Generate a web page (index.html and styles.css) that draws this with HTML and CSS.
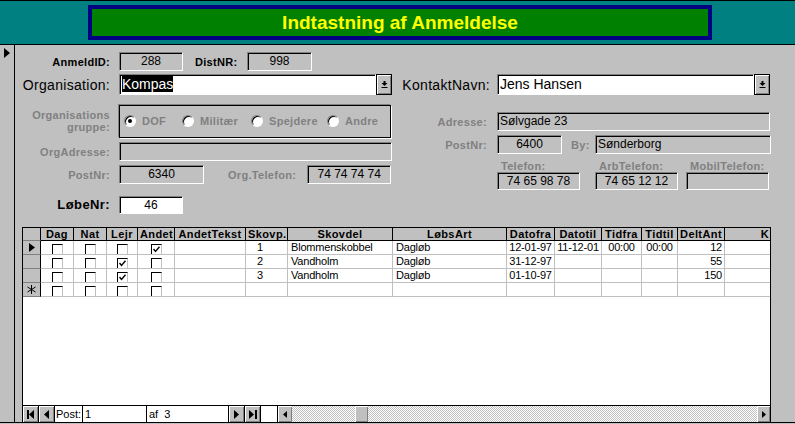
FILE: index.html
```html
<!DOCTYPE html>
<html lang="da">
<head>
<meta charset="utf-8">
<title>Indtastning af Anmeldelse</title>
<link rel="stylesheet" href="styles.css">
</head>
<body>
<div class="app">
  <header class="titlebar">
    <div class="title">Indtastning af Anmeldelse</div>
  </header>
  <div class="body">
    <div class="recsel">
      <svg class="tri" width="6" height="10" viewBox="0 0 6 10"><polygon points="0,0 6,5 0,10" fill="#000"/></svg>
    </div>
    <div class="form">
      <div class="top">
        <div class="left">
          <div class="row r1">
            <span class="lbl lw">AnmeldID:</span>
            <div class="box c f1">288</div>
            <span class="lbl distlbl">DistNR:</span>
            <div class="box c distbox">998</div>
          </div>
          <div class="row r2">
            <span class="biglbl lw">Organisation:</span>
            <div class="input f1 orginput"><span class="sel">Kompas</span></div>
            <div class="drop"><svg width="7" height="8" viewBox="0 0 7 8"><rect x="2.5" y="0" width="2" height="2" fill="#000"/><polygon points="0.5,2 6.5,2 3.5,5" fill="#000"/><rect x="0.5" y="6" width="6" height="1" fill="#000"/></svg></div>
          </div>
          <div class="row r3">
            <span class="lbl lw dim two">Organisations<br>gruppe:</span>
            <div class="frame f1">
              <div class="opt"><span class="radio on"></span><span class="lbl dim">DOF</span></div>
              <div class="opt"><span class="radio"></span><span class="lbl dim">Militær</span></div>
              <div class="opt"><span class="radio"></span><span class="lbl dim">Spejdere</span></div>
              <div class="opt"><span class="radio"></span><span class="lbl dim">Andre</span></div>
            </div>
          </div>
          <div class="row r4">
            <span class="lbl lw dim">OrgAdresse:</span>
            <div class="box f1 orgadr"></div>
          </div>
          <div class="row r5">
            <span class="lbl lw dim">PostNr:</span>
            <div class="box c f1 postbox">6340</div>
            <span class="lbl dim orgtellbl">Org.Telefon:</span>
            <div class="box c orgtel">74 74 74 74</div>
          </div>
          <div class="row r6">
            <span class="lbl lw lobelbl">LøbeNr:</span>
            <div class="box white c f1 lobebox">46</div>
          </div>
        </div>
        <div class="right">
          <div class="row rr1">
            <span class="biglbl kontaktlbl">KontaktNavn:</span>
            <div class="input kontaktinput">Jens Hansen</div>
            <div class="drop"><svg width="7" height="8" viewBox="0 0 7 8"><rect x="2.5" y="0" width="2" height="2" fill="#000"/><polygon points="0.5,2 6.5,2 3.5,5" fill="#000"/><rect x="0.5" y="6" width="6" height="1" fill="#000"/></svg></div>
          </div>
          <div class="row rr2">
            <span class="lbl rlw dim">Adresse:</span>
            <div class="box rf adr">Sølvgade 23</div>
          </div>
          <div class="row rr3">
            <span class="lbl rlw dim">PostNr:</span>
            <div class="box c rf rpost">6400</div>
            <span class="lbl dim bylbl">By:</span>
            <div class="box bybox">Sønderborg</div>
          </div>
          <div class="tels">
            <div class="tel"><span class="lbl dim tl">Telefon:</span><div class="box c telbox">74 65 98 78</div></div>
            <div class="tel t2"><span class="lbl dim tl">ArbTelefon:</span><div class="box c telbox">74 65 12 12</div></div>
            <div class="tel t3"><span class="lbl dim tl">MobilTelefon:</span><div class="box c telbox"></div></div>
          </div>
        </div>
      </div>

      <div class="sheet">
        <div class="gridwrap">
          <div class="grow head">
            <div class="cell rs"></div>
            <div class="cell">Dag</div>
            <div class="cell">Nat</div>
            <div class="cell">Lejr</div>
            <div class="cell">Andet</div>
            <div class="cell">AndetTekst</div>
            <div class="cell">Skovp.</div>
            <div class="cell">Skovdel</div>
            <div class="cell">LøbsArt</div>
            <div class="cell">Datofra</div>
            <div class="cell">Datotil</div>
            <div class="cell">Tidfra</div>
            <div class="cell">Tidtil</div>
            <div class="cell">DeltAnt</div>
            <div class="cell lastcol">K</div>
          </div>
          <div class="grow">
            <div class="cell rs"><svg width="6" height="9" viewBox="0 0 6 9"><polygon points="0,0 6,4.5 0,9" fill="#000"/></svg></div>
            <div class="cell cc"><span class="chk"></span></div>
            <div class="cell cc"><span class="chk"></span></div>
            <div class="cell cc"><span class="chk"></span></div>
            <div class="cell cc"><span class="chk on"><svg width="7" height="7" viewBox="0 0 7 7"><polyline points="0.5,3 2.5,5.5 6.5,0.8" fill="none" stroke="#000" stroke-width="1.4"/></svg></span></div>
            <div class="cell"></div>
            <div class="cell num">1</div>
            <div class="cell txt">Blommenskobbel</div>
            <div class="cell txt">Dagløb</div>
            <div class="cell ctr">12-01-97</div>
            <div class="cell ctr">11-12-01</div>
            <div class="cell ctr">00:00</div>
            <div class="cell ctr">00:00</div>
            <div class="cell rgt">12</div>
            <div class="cell"></div>
          </div>
          <div class="grow">
            <div class="cell rs"></div>
            <div class="cell cc"><span class="chk"></span></div>
            <div class="cell cc"><span class="chk"></span></div>
            <div class="cell cc"><span class="chk on"><svg width="7" height="7" viewBox="0 0 7 7"><polyline points="0.5,3 2.5,5.5 6.5,0.8" fill="none" stroke="#000" stroke-width="1.4"/></svg></span></div>
            <div class="cell cc"><span class="chk"></span></div>
            <div class="cell"></div>
            <div class="cell num">2</div>
            <div class="cell txt">Vandholm</div>
            <div class="cell txt">Dagløb</div>
            <div class="cell ctr">31-12-97</div>
            <div class="cell ctr"></div>
            <div class="cell ctr"></div>
            <div class="cell ctr"></div>
            <div class="cell rgt">55</div>
            <div class="cell"></div>
          </div>
          <div class="grow">
            <div class="cell rs"></div>
            <div class="cell cc"><span class="chk"></span></div>
            <div class="cell cc"><span class="chk"></span></div>
            <div class="cell cc"><span class="chk on"><svg width="7" height="7" viewBox="0 0 7 7"><polyline points="0.5,3 2.5,5.5 6.5,0.8" fill="none" stroke="#000" stroke-width="1.4"/></svg></span></div>
            <div class="cell cc"><span class="chk"></span></div>
            <div class="cell"></div>
            <div class="cell num">3</div>
            <div class="cell txt">Vandholm</div>
            <div class="cell txt">Dagløb</div>
            <div class="cell ctr">01-10-97</div>
            <div class="cell ctr"></div>
            <div class="cell ctr"></div>
            <div class="cell ctr"></div>
            <div class="cell rgt">150</div>
            <div class="cell"></div>
          </div>
          <div class="grow">
            <div class="cell rs"><svg width="9" height="9" viewBox="0 0 9 9"><g stroke="#000" stroke-width="1"><line x1="4.5" y1="0" x2="4.5" y2="9"/><line x1="0.5" y1="2" x2="8.5" y2="7"/><line x1="0.5" y1="7" x2="8.5" y2="2"/></g></svg></div>
            <div class="cell cc"><span class="chk"></span></div>
            <div class="cell cc"><span class="chk"></span></div>
            <div class="cell cc"><span class="chk"></span></div>
            <div class="cell cc"><span class="chk"></span></div>
            <div class="cell"></div>
            <div class="cell"></div>
            <div class="cell"></div>
            <div class="cell"></div>
            <div class="cell"></div>
            <div class="cell"></div>
            <div class="cell"></div>
            <div class="cell"></div>
            <div class="cell"></div>
            <div class="cell"></div>
          </div>
        </div>
        <div class="empty"></div>
        <div class="nav">
          <div class="nb"><svg width="8" height="9" viewBox="0 0 8 9"><rect x="0" y="0" width="2" height="9" fill="#000"/><polygon points="7,0 2,4.5 7,9" fill="#000"/></svg></div>
          <div class="nb"><svg width="5" height="9" viewBox="0 0 5 9"><polygon points="5,0 0,4.5 5,9" fill="#000"/></svg></div>
          <div class="post">Post:</div>
          <div class="recno">1</div>
          <div class="of">af&nbsp;&nbsp;3</div>
          <div class="nb nl"><svg width="5" height="9" viewBox="0 0 5 9"><polygon points="0,0 5,4.5 0,9" fill="#000"/></svg></div>
          <div class="nb"><svg width="8" height="9" viewBox="0 0 8 9"><polygon points="0,0 5,4.5 0,9" fill="#000"/><rect x="6" y="0" width="2" height="9" fill="#000"/></svg></div>
          <div class="navgap"></div>
          <div class="sbtn sl"><svg width="4" height="7" viewBox="0 0 4 7"><polygon points="4,0 0,3.5 4,7" fill="#000"/></svg></div>
          <div class="track"><div class="thumb"></div></div>
          <div class="sbtn sr"><svg width="4" height="7" viewBox="0 0 4 7"><polygon points="0,0 4,3.5 0,7" fill="#000"/></svg></div>
        </div>
      </div>
    </div>
  </div>
</div>
</body>
</html>
```

FILE: styles.css
```css
* { box-sizing: border-box; }
html, body { margin: 0; padding: 0; }
body {
  background: #c0c0c0;
  font-family: "Liberation Sans", Arial, sans-serif;
  color: #000;
}
.app {
  width: 795px;
  height: 424px;
  background: #c0c0c0;
  overflow: hidden;
}

/* title band */
.titlebar {
  height: 45px;
  background: #008080;
  border-top: 1px solid #000;
  border-bottom: 1px solid #000;
  padding: 4px 0 0 88px;
}
.title {
  width: 624px;
  height: 35px;
  background: #008000;
  border: 4px solid #000080;
  color: #ffff00;
  font-weight: bold;
  font-size: 19px;
  line-height: 27px;
  text-align: center;
}

/* main body */
.body {
  display: flex;
  height: 378px;
  border-bottom: 1px solid #000;
}
.recsel {
  width: 15px;
  flex: none;
  border-right: 1px solid #000;
  padding: 3px 0 0 4px;
}
.recsel .tri { display: block; }
.form {
  flex: 1;
  min-width: 0;
  display: flex;
  flex-direction: column;
}
.top { display: flex; }
.left {
  width: 380px;
  flex: none;
  display: flex;
  flex-direction: column;
}
.right {
  flex: 1;
  display: flex;
  flex-direction: column;
  padding-top: 29px;
}

.row { display: flex; align-items: center; }
.r1 { margin-top: 7px; height: 19px; }
.r2 { margin-top: 3px; height: 21px; }
.r3 { margin-top: 10px; height: 33px; }
.r4 { margin-top: 4px; height: 19px; }
.r5 { margin-top: 4px; height: 19px; }
.r6 { margin-top: 11px; height: 19px; }

.lbl {
  font-size: 11px;
  font-weight: bold;
  letter-spacing: 0.3px;
  white-space: nowrap;
}
.biglbl {
  font-size: 14px;
  letter-spacing: 0.3px;
  white-space: nowrap;
}
.lw { width: 95px; flex: none; text-align: right; }
.dim { color: #808080; }
.two { line-height: 12px; margin-top: -2px; }
.f1 { margin-left: 9px; }

/* boxes */
.box {
  height: 19px;
  border: 1px solid;
  border-color: #808080 #fff #fff #808080;
  box-shadow: inset 1px 1px 0 #000;
  font-size: 12px;
  line-height: 17px;
  padding: 0 2px;
  white-space: nowrap;
  overflow: hidden;
  flex: none;
}
.box.c { text-align: center; }
.box.white { background: #fff; }
.r1 .box:first-of-type { width: 64px; }
.distlbl { margin-left: 12px; width: 43px; }
.distbox { width: 65px; margin-left: 9px; }

.input {
  height: 21px;
  background: #fff;
  border: 1px solid;
  border-color: #808080 #fff #fff #808080;
  box-shadow: inset 1px 1px 0 #000;
  font-size: 14px;
  line-height: 19px;
  padding-left: 2px;
  white-space: nowrap;
  flex: none;
}
.orginput { width: 257px; }
.sel { background: #000; color: #fff; }
.drop {
  width: 16px;
  height: 21px;
  flex: none;
  background: #c0c0c0;
  border: 1px solid #000;
  box-shadow: inset 1px 1px 0 #fff, inset -1px -1px 0 #808080;
  display: flex;
  align-items: center;
  justify-content: center;
}
.drop svg { display: block; }

/* option group */
.frame {
  width: 272px;
  height: 33px;
  border: 1px solid #000;
  box-shadow: -1px -1px 0 #808080, 1px 1px 0 #fff;
  display: grid;
  grid-template-columns: 58px 69px 76px auto;
  align-items: center;
  padding: 0 0 2px 4px;
}
.opt { display: flex; align-items: center; gap: 6px; }
.radio {
  width: 12px;
  height: 12px;
  flex: none;
  border-radius: 50%;
  background: #fff;
  border: 1px solid;
  border-color: #808080 #fff #fff #808080;
  box-shadow: inset 1px 1px 0 #000;
}
.radio.on::after {
  content: "";
  display: block;
  width: 4px;
  height: 4px;
  margin: 3px;
  border-radius: 50%;
  background: #000;
}

.orgadr { width: 273px; }
.postbox { width: 85px; }
.orgtellbl { margin-left: 24px; }
.orgtel { width: 84px; margin-left: 11px; font-size: 12px; }
.lobelbl { font-size: 13px; letter-spacing: 0.4px; }
.lobebox { width: 64px; height: 18px; line-height: 16px; }

/* right column */
.rr1 { height: 21px; }
.kontaktlbl { width: 95px; text-align: right; flex: none; }
.kontaktinput { width: 257px; margin-left: 7px; }
.rr2 { margin-top: 17px; height: 19px; }
.rr3 { margin-top: 4px; height: 19px; }
.rlw { width: 92px; flex: none; text-align: right; }
.rf { margin-left: 10px; }
.adr { width: 273px; }
.rpost { width: 65px; }
.bylbl { margin-left: 9px; width: 16px; }
.bybox { width: 176px; margin-left: 8px; }
.tels { display: flex; margin-left: 102px; margin-top: 7px; }
.tel { display: flex; flex-direction: column; width: 83px; }
.tel.t2 { margin-left: 15px; }
.tel.t3 { margin-left: 8px; }
.tl { height: 11px; line-height: 11px; padding-left: 4px; }
.telbox { height: 18px; line-height: 16px; }

/* datasheet */
.sheet {
  margin-left: 7px;
  margin-top: 13px;
  width: 749px;
  flex: 1;
  border: 1px solid #000;
  border-bottom: 0;
  background: #fff;
  display: flex;
  flex-direction: column;
  overflow: hidden;
}
.gridwrap { width: 747px; flex: none; }
.grow {
  display: grid;
  grid-template-columns: 18px 33px 33px 31px 37px 71px 42px 105px 114px 48px 47px 40px 36px 47px 45px;
  height: 14px;
}
.cell {
  border-right: 1px solid #c0c0c0;
  border-bottom: 1px solid #c0c0c0;
  font-size: 11px;
  line-height: 13px;
  padding: 0 2px;
  white-space: nowrap;
  overflow: hidden;
  letter-spacing: -0.2px;
}
.grow .cell:last-child { border-right: 0; }
.grow.head { height: 13px; }
.head .cell {
  background: #c0c0c0;
  border-right-color: #000;
  border-bottom-color: #000;
  font-weight: bold;
  text-align: center;
  line-height: 12px;
  letter-spacing: 0.4px;
}
.head .cell.lastcol { text-align: right; padding-right: 1px; }
.cell.rs {
  background: #c0c0c0;
  border-right-color: #000;
  border-bottom-color: #808080;
  display: flex;
  align-items: center;
  justify-content: center;
  padding: 0;
}
.cell.rs svg { display: block; }
.cell.cc { padding: 0; }
.chk {
  display: block;
  width: 11px;
  height: 10px;
  margin: 3px auto 0;
  background: #fff;
  border-top: 1px solid #000;
  border-left: 1px solid #000;
  border-right: 1px solid #c0c0c0;
}
.chk svg { display: block; margin: 1px 0 0 1px; }
.cell.num { padding-left: 11px; }
.cell.txt { padding-left: 3px; }
.cell.ctr { text-align: center; padding: 0; }
.cell.rgt { text-align: right; padding-right: 2px; }

.empty { flex: 1; background: #fff; }

/* navigation bar */
.nav {
  height: 17px;
  flex: none;
  border-top: 1px solid #000;
  background: #fff;
  display: flex;
  font-size: 11px;
  white-space: nowrap;
}
.nb {
  width: 16px;
  height: 16px;
  flex: none;
  background: #c0c0c0;
  border-right: 1px solid #000;
  box-shadow: inset 1px 1px 0 #fff, inset -1px -1px 0 #808080;
  display: flex;
  align-items: center;
  justify-content: center;
}
.nb.nl { width: 17px; border-left: 1px solid #000; }
.nb svg, .sbtn svg { display: block; }
.post {
  width: 28px;
  flex: none;
  padding-left: 1px;
  line-height: 16px;
  border-right: 1px solid #000;
  overflow: hidden;
}
.recno {
  width: 64px;
  flex: none;
  padding-left: 2px;
  line-height: 16px;
  border-right: 1px solid #000;
}
.of {
  width: 81px;
  flex: none;
  padding-left: 2px;
  line-height: 16px;
}
.navgap { width: 16px; flex: none; }
.sbtn {
  height: 16px;
  flex: none;
  background: #c0c0c0;
  box-shadow: inset 1px 1px 0 #fff, inset -1px -1px 0 #808080;
  display: flex;
  align-items: center;
  justify-content: center;
}
.sbtn.sl { width: 15px; border-left: 1px solid #000; }
.sbtn.sr { width: 13px; }
.track {
  flex: 1;
  height: 16px;
  background-color: #c0c0c0;
  background-image: repeating-conic-gradient(#ffffff 0 25%, #c0c0c0 0 50%);
  background-size: 2px 2px;
  padding-left: 63px;
}
.thumb {
  width: 13px;
  height: 16px;
  background: #c0c0c0;
  box-shadow: inset 1px 1px 0 #fff, inset -1px -1px 0 #808080;
}
```
